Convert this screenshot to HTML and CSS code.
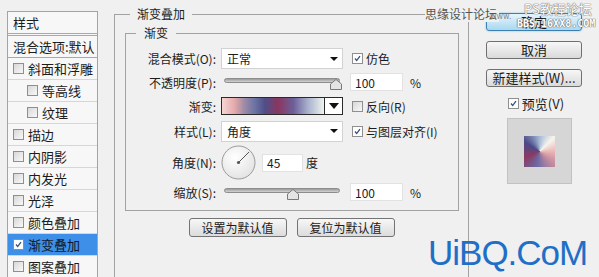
FILE: index.html
```html
<!DOCTYPE html>
<html>
<head>
    <meta charset="utf-8">
    <meta name="viewport" content="width=device-width, initial-scale=1.0">
    <link rel="stylesheet" href="styles.css">
</head>
<body>
<div class="fx-list">
    <div class="fx-head fx-title">样式</div>
    <div class="fx-head">混合选项:默认</div>
    <div class="fx-item"><span class="cb"></span>斜面和浮雕</div>
    <div class="fx-item fx-sub"><span class="cb"></span>等高线</div>
    <div class="fx-item fx-sub"><span class="cb"></span>纹理</div>
    <div class="fx-item"><span class="cb"></span>描边</div>
    <div class="fx-item"><span class="cb"></span>内阴影</div>
    <div class="fx-item"><span class="cb"></span>内发光</div>
    <div class="fx-item"><span class="cb"></span>光泽</div>
    <div class="fx-item"><span class="cb"></span>颜色叠加</div>
    <div class="fx-item fx-active"><span class="cb checked"><svg viewBox="0 0 11 11"><path d="M2.5 5.5 L4.5 8 L8.5 2.5" /></svg></span>渐变叠加</div>
    <div class="fx-item"><span class="cb"></span>图案叠加</div>
</div>

<fieldset class="group outer">
    <legend>渐变叠加</legend>
    <fieldset class="group inner">
        <legend>渐变</legend>
        <div class="form">
            <label>混合模式(O):</label>
            <div class="select"><span>正常</span><i class="arrow"></i></div>
            <div class="check"><span class="cb checked"><svg viewBox="0 0 11 11"><path d="M2.5 5.5 L4.5 8 L8.5 2.5" /></svg></span>仿色</div>

            <label>不透明度(P):</label>
            <div class="slider">
                <div class="track"></div>
                <svg class="thumb" style="left: 109px" viewBox="0 0 12 11"><path d="M0.5 10.5 V5 L6 0.5 L11.5 5 V10.5 Z" /></svg>
            </div>
            <div class="num"><span class="field wide">100</span>%</div>

            <label>渐变:</label>
            <div class="grad-pick">
                <div class="grad"></div>
                <div class="grad-btn"><i class="arrow big"></i></div>
            </div>
            <div class="check"><span class="cb"></span>反向(R)</div>

            <label>样式(L):</label>
            <div class="select"><span>角度</span><i class="arrow"></i></div>
            <div class="check"><span class="cb checked"><svg viewBox="0 0 11 11"><path d="M2.5 5.5 L4.5 8 L8.5 2.5" /></svg></span>与图层对齐(I)</div>

            <label>角度(N):</label>
            <div class="angle">
                <svg class="dial" viewBox="0 0 35 35">
                    <defs>
                        <radialGradient id="dialFill" cx="40%" cy="35%" r="70%">
                            <stop offset="0" stop-color="#ffffff" />
                            <stop offset="1" stop-color="#e2e2e2" />
                        </radialGradient>
                    </defs>
                    <circle cx="17.5" cy="17.5" r="16.5" fill="url(#dialFill)" stroke="#9a9a9a" />
                    <line x1="17.5" y1="17.5" x2="28" y2="7" stroke="#555" stroke-width="1" />
                    <circle cx="17.5" cy="17.5" r="1.6" fill="#555" />
                </svg>
                <span class="field short">45</span>
                <span class="unit">度</span>
            </div>
            <div></div>

            <label>缩放(S):</label>
            <div class="slider">
                <div class="track"></div>
                <svg class="thumb" style="left: 66px" viewBox="0 0 12 11"><path d="M0.5 10.5 V5 L6 0.5 L11.5 5 V10.5 Z" /></svg>
            </div>
            <div class="num"><span class="field wide">100</span>%</div>
        </div>
    </fieldset>
    <div class="defaults">
        <button class="btn-small">设置为默认值</button>
        <button class="btn-small">复位为默认值</button>
    </div>
</fieldset>

<div class="side">
    <button class="btn btn-ok">确定</button>
    <button class="btn">取消</button>
    <button class="btn">新建样式(W)...</button>
    <div class="preview-check"><span class="cb checked"><svg viewBox="0 0 11 11"><path d="M2.5 5.5 L4.5 8 L8.5 2.5" /></svg></span>预览(V)</div>
    <div class="preview">
        <div class="swatch"></div>
    </div>
</div>

<span class="wm-site">思缘设计论坛</span>
<span class="wm-www">www.</span>
<span class="wm-ps">PS教程论坛</span>
<span class="wm-bbs">BBS.16XX8.COM</span>
<span class="wm-uibq">UiBQ.CoM</span>
</body>
</html>
```

FILE: styles.css
```css
* {
    box-sizing: border-box;
}

body {
    margin: 0;
    width: 599px;
    height: 277px;
    overflow: hidden;
    position: relative;
    display: flex;
    align-items: flex-start;
    background: #f0f0f0;
    color: #1c1c1c;
    font-family: "Noto Sans CJK SC", "DejaVu Sans", sans-serif;
    font-size: 12px;
}

/* left list of layer styles */
.fx-list {
    margin: 11px 0 0 7px;
    width: 91px;
    border: 1px solid #a3a3a3;
    border-bottom: none;
    background: #f7f7f7;
    font-size: 13px;
}

.fx-head {
    height: 22px;
    line-height: 21px;
    padding-left: 5px;
    border-bottom: 1px solid #a8a8a8;
    white-space: nowrap;
}

.fx-title {
    height: 24px;
    border-bottom: 3px double #a8a8a8;
}

.fx-item {
    height: 22px;
    display: flex;
    align-items: center;
    padding-left: 5px;
    border-bottom: 1px solid #d6d6d6;
    white-space: nowrap;
}

.fx-item .cb {
    margin-right: 4px;
}

.fx-sub {
    padding-left: 19px;
}

.fx-active {
    background: #3d8fe8;
    color: #101828;
}

/* checkboxes */
.cb {
    display: inline-block;
    flex: none;
    width: 11px;
    height: 11px;
    border: 1px solid #8f8f8f;
    background: linear-gradient(135deg, #d8d8d8, #f8f8f8);
    vertical-align: middle;
}

.cb.checked {
    background: #fdfdfd;
}

.cb svg {
    display: block;
    width: 9px;
    height: 9px;
}

.cb path {
    fill: none;
    stroke: #34507e;
    stroke-width: 1.6;
}

/* group boxes */
.group {
    margin: 0;
    padding: 0;
    min-width: 0;
    border: 1px solid #a2a2a2;
}

.group legend {
    padding: 0 7px;
    line-height: 14px;
    font-size: 12px;
}

.outer {
    margin: 7px 0 0 16px;
    width: 355px;
    height: 270px;
    border-bottom: none;
}

.outer > legend {
    margin-left: 15px;
}

.inner {
    margin: 5px 0 0 10px;
    width: 334px;
}

.inner > legend {
    margin-left: 10px;
    padding: 0 8px;
}

.form {
    display: grid;
    grid-template-columns: 95px 131px 1fr;
    grid-template-rows: 21px 20px 22px 22px 35px 18px;
    row-gap: 3px;
    align-items: center;
    padding: 8px 0 9px 0;
}

.form label {
    text-align: right;
    padding-right: 5px;
    white-space: nowrap;
}

.select {
    width: 122px;
    height: 21px;
    display: flex;
    align-items: center;
    justify-content: space-between;
    padding: 0 4px 0 5px;
    background: #fff;
    border: 1px solid #d2d2d2;
}

.arrow {
    width: 0;
    height: 0;
    border-left: 4px solid transparent;
    border-right: 4px solid transparent;
    border-top: 4px solid #111;
}

.arrow.big {
    border-left-width: 5px;
    border-right-width: 5px;
    border-top-width: 6px;
}

.check {
    display: flex;
    align-items: center;
    white-space: nowrap;
}

.check .cb {
    margin-right: 3px;
}

.slider {
    position: relative;
    width: 122px;
    height: 20px;
}

.track {
    position: absolute;
    left: 3px;
    right: 3px;
    top: 6px;
    height: 5px;
    border: 1px solid #8d8d8d;
    border-radius: 3px;
    background: linear-gradient(#9a9a9a, #d4d4d4);
}

.thumb {
    position: absolute;
    top: 7px;
    width: 12px;
    height: 11px;
}

.thumb path {
    fill: #e4e4e4;
    stroke: #7a7a7a;
}

.num {
    display: flex;
    align-items: center;
    margin-left: -2px;
}

.field {
    display: inline-flex;
    align-items: center;
    height: 18px;
    padding-left: 4px;
    background: #fff;
    border: 1px solid #e2e2e2;
}

.field.wide {
    width: 53px;
    margin-right: 7px;
}

.field.short {
    width: 41px;
    margin: 0 3px 0 6px;
}

.grad-pick {
    width: 122px;
    height: 18px;
    display: flex;
    border: 1px solid #2a2a2a;
}

.grad {
    flex: 1;
    border-right: 1px solid #2a2a2a;
    background: linear-gradient(90deg, #f4d6d3 0%, #e6aaac 12%, #9e8aa6 22%, #6b74a4 32%, #4e4f88 42%, #8b3660 55%, #6c5f98 70%, #a6b0cc 84%, #eef4ee 100%);
}

.grad-btn {
    width: 17px;
    display: flex;
    align-items: center;
    justify-content: center;
    background: #fff;
}

.angle {
    display: flex;
    align-items: center;
}

.dial {
    width: 35px;
    height: 35px;
}

.defaults {
    display: flex;
    justify-content: center;
    gap: 10px;
    margin-top: 7px;
}

.btn-small {
    width: 98px;
    height: 19px;
    padding: 0;
    font-family: inherit;
    font-size: 12px;
    line-height: 17px;
    color: #1c1c1c;
    background: linear-gradient(#f7f7f7, #dcdcdc);
    border: 1px solid #737373;
    border-radius: 3px;
}

/* right column */
.side {
    display: flex;
    flex-direction: column;
    padding-left: 17px;
    width: 130px;
}

.btn {
    width: 96px;
    height: 18px;
    padding: 0;
    margin-top: 10px;
    font-family: inherit;
    font-size: 13px;
    line-height: 16px;
    color: #1c1c1c;
    background: linear-gradient(#f7f7f7, #dadada);
    border: 1px solid #707070;
    border-radius: 3px;
}

.btn-ok {
    margin-top: 13px;
    background: linear-gradient(#e6f5fd, #a8d8f1);
    border-color: #3c7fb1;
    box-shadow: 0 0 2px #6ac4e6;
}

.preview-check {
    display: flex;
    align-items: center;
    justify-content: center;
    width: 100px;
    height: 16px;
    margin-top: 8px;
    font-size: 13px;
}

.preview-check .cb {
    margin-right: 3px;
}

.preview {
    width: 65px;
    height: 66px;
    margin: 7px 0 0 21px;
    display: flex;
    align-items: center;
    justify-content: center;
    background: #d6d6d6;
    border: 1px solid #c2c2c2;
}

.swatch {
    width: 31px;
    height: 31px;
    background: conic-gradient(from 45deg, #f6f4ee, #eab8b6 12%, #c58c9e 24%, #6c6aa6 40%, #8a3a62 56%, #4a4a88 72%, #a8bcd6 88%, #f6f4ee);
}

/* watermarks */
.wm-site {
    position: absolute;
    left: 425px;
    top: 6px;
    padding-right: 2px;
    line-height: 16px;
    background: #f0f0f0;
    color: #555;
    font-size: 12px;
}

.wm-www {
    position: absolute;
    left: 490px;
    top: 12px;
    color: #8a8a8a;
    font-family: "DejaVu Sans", sans-serif;
    font-size: 8px;
}

.wm-ps {
    position: absolute;
    left: 524px;
    top: 1px;
    color: #fff;
    font-size: 13px;
    line-height: 16px;
    text-shadow: 0 0 1px #777, 0 0 1px #777, 0 0 1px #777;
}

.wm-bbs {
    position: absolute;
    left: 517px;
    top: 17px;
    color: #fff;
    font-family: "DejaVu Sans Mono", monospace;
    font-size: 10px;
    font-weight: bold;
    line-height: 13px;
    text-shadow: 0 0 1px #666, 0 0 1px #666, 0 0 1px #666;
}

.wm-uibq {
    position: absolute;
    left: 428px;
    top: 235px;
    color: #1f6fc6;
    font-family: "Liberation Sans", Arial, sans-serif;
    font-size: 35px;
    line-height: 35px;
    letter-spacing: -1px;
}
```
